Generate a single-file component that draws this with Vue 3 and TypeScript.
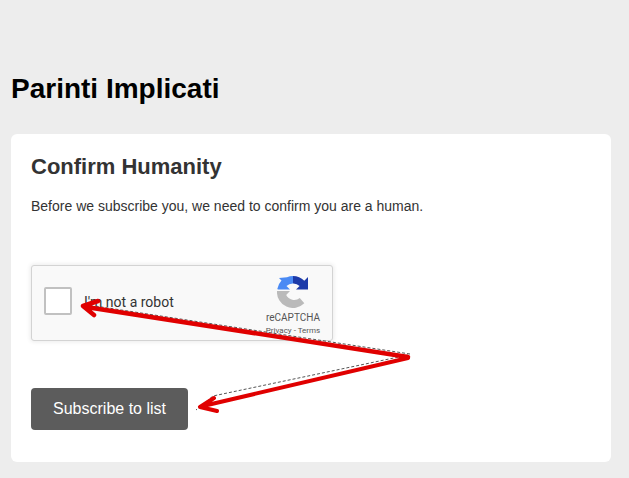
<script setup lang="ts">
const title = "Parinti Implicati";
</script>

<template>
  <div class="page">
    <h1>{{ title }}</h1>
    <div class="card">
      <h2>Confirm Humanity</h2>
      <p>Before we subscribe you, we need to confirm you are a human.</p>
      <div class="captcha">
        <span class="check"></span>
        <span class="label">I'm not a robot</span>
        <div class="brand">
          <svg class="logo" width="32" height="32" viewBox="0 0 32 32">
            <path d="M16 0 L16 7.5 A9 9 0 0 0 9.5 10 L13 13.5 L1 13.5 L0.3 13 A16 16 0 0 1 4.5 4.5 L2 2 L10 1.2 A16 16 0 0 1 16 0 Z" fill="#4a8af4" />
            <path d="M16 0 A16 16 0 0 1 27.3 4.7 L31 1 L31 13.5 L19 13.5 L22.6 10 A9 9 0 0 0 16 7.5 Z" fill="#1c3aa9" />
            <path d="M0 15 L13 15 L9.2 19 A9 9 0 0 0 22.8 22 L27.3 27.3 A16 16 0 0 1 0 15 Z" fill="#bababa" />
          </svg>
          <span class="brand-name">reCAPTCHA</span>
          <span class="brand-links">Privacy - Terms</span>
        </div>
      </div>
      <button type="button">Subscribe to list</button>
    </div>
    <svg class="arrows" width="629" height="478" viewBox="0 0 629 478">
      <path d="M410 354 L95 306 M408 355 L213 396 L196 410" fill="none" stroke="#555" stroke-width="1" stroke-dasharray="3 2" />
      <path d="M408 357 L86 307 M98 301 L83 306 L94 315" fill="none" stroke="#e00000" stroke-width="4.5" stroke-linejoin="round" stroke-linecap="round" />
      <path d="M408 358 L203 406 M214 398 L200 407 L217 411" fill="none" stroke="#e00000" stroke-width="4" stroke-linejoin="round" stroke-linecap="round" />
    </svg>
  </div>
</template>

<style>
html,
body {
  margin: 0;
  background: #ededed;
}
</style>

<style scoped>
.page {
  position: relative;
  box-sizing: border-box;
  height: 478px;
  overflow: hidden;
  padding: 72px 18px 0 11px;
  background: #ededed;
  font-family: "Liberation Sans", Arial, sans-serif;
}

h1 {
  margin: 0 0 28px;
  font-size: 28px;
  line-height: 34px;
  font-weight: 700;
  color: #000;
}

.card {
  box-sizing: border-box;
  height: 328px;
  padding: 20px;
  background: #fff;
  border-radius: 6px;
}

h2 {
  margin: 0 0 16px;
  font-size: 22px;
  line-height: 26px;
  font-weight: 700;
  color: #333;
}

p {
  margin: 0 0 49px;
  font-size: 14px;
  line-height: 20px;
  color: #333;
}

.captcha {
  box-sizing: border-box;
  display: flex;
  align-items: center;
  width: 302px;
  height: 76px;
  margin-bottom: 47px;
  padding-left: 12px;
  background: #f9f9f9;
  border: 1px solid #d3d3d3;
  border-radius: 3px;
  box-shadow: 0 0 4px 1px rgba(0, 0, 0, 0.08);
  font-family: Roboto, "Liberation Sans", sans-serif;
}

.check {
  box-sizing: border-box;
  width: 28px;
  height: 28px;
  margin-bottom: 4px;
  background: #fff;
  border: 2px solid #c1c1c1;
  border-radius: 2px;
}

.label {
  margin-left: 12px;
  margin-bottom: 2px;
  font-size: 14px;
  color: #333;
}

.brand {
  display: flex;
  flex-direction: column;
  align-items: center;
  width: 70px;
  margin-left: auto;
  margin-right: 4px;
  padding-top: 7px;
  color: #555;
}

.logo {
  margin-bottom: 3px;
}

.brand-name {
  font-size: 10px;
  line-height: 13px;
}

.brand-links {
  font-size: 8px;
  line-height: 12px;
  margin-top: 1px;
}

button {
  display: block;
  width: 157px;
  height: 42px;
  padding: 0;
  background: #5c5c5c;
  color: #fff;
  border: none;
  border-radius: 4px;
  font-family: "Liberation Sans", Arial, sans-serif;
  font-size: 16px;
}

.arrows {
  position: absolute;
  top: 0;
  left: 0;
  pointer-events: none;
}
</style>
